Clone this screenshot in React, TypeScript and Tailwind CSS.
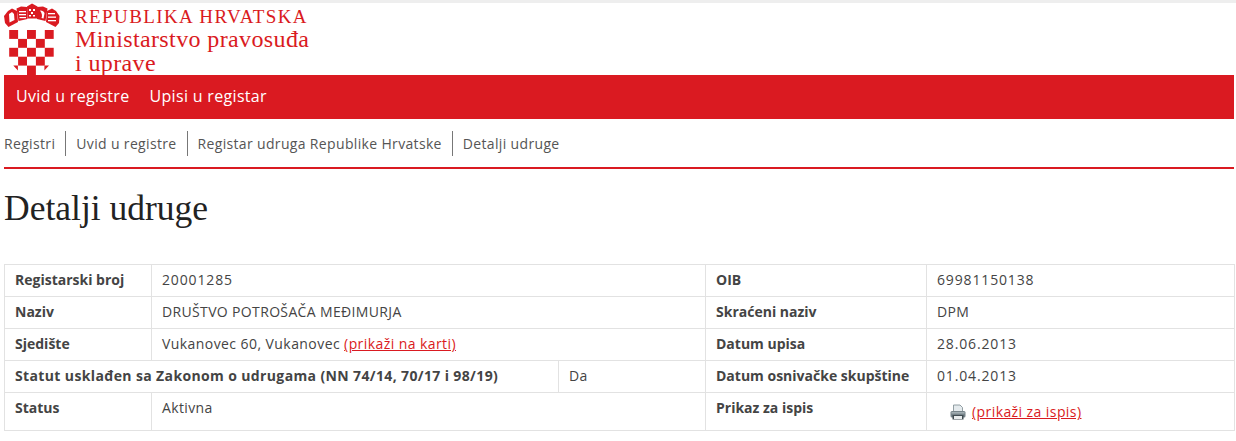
import React from 'react';

const sans = 'font-["Open_Sans","Noto_Sans",sans-serif]';

const CoatOfArms = () => {
  // red squares of the checkerboard, column and row
  const cells = [
    [0, 0], [2, 0], [4, 0],
    [1, 1], [3, 1],
    [0, 2], [2, 2], [4, 2],
    [1, 3], [3, 3],
  ];
  return (
    <svg width="56" height="72" viewBox="0 0 56 72" className="block shrink-0">
      <g fill="#da1a21">
        {cells.map(([c, r]) => (
          <rect key={`${c}-${r}`} x={5.2 + c * 8.9} y={27 + r * 8.9} width="8.9" height="8.9" />
        ))}
        <path d="M23 62.6h8.9V72H23z" />
        <path d="M9.3 62.6h4.6v5zM45 62.6h-4.6v5z" />
        {/* crown shields, left to right */}
        <path d="M0 13 L4 8 L8 5.5 L13 8 L14 19 L4.5 24 L1 20 Z" />
        <path d="M12.5 5.5 L17 3.5 L23 4 L23.5 16 L14.5 18 Z" />
        <path d="M23 3.5 L28 0.5 L33.5 3.5 L33 15.5 L23.5 15.5 Z" />
        <path d="M33 4 L39 3.5 L43.5 5.5 L41.5 18 L33 16 Z" />
        <path d="M43 8 L48 5.5 L52 8 L55.5 13 L55 20 L51.5 24 L42 19 Z" />
      </g>
      <g fill="#fff">
        <path d="M5 11l3-2 2 2 .5 6-5 2.5z" />
        <rect x="15" y="8" width="7" height="1.3" />
        <rect x="15" y="11" width="7" height="1.3" />
        <rect x="15.5" y="14" width="6.5" height="1.2" />
        <rect x="25" y="6" width="2" height="2" />
        <rect x="29" y="6" width="2" height="2" />
        <rect x="27" y="9" width="2" height="2" />
        <rect x="25" y="12" width="2" height="1.5" />
        <rect x="29" y="12" width="2" height="1.5" />
        <path d="M36 7.5c3 0 4.5 1.5 4.5 3l-1 5-2-.5c1-2 .5-5-1.5-7.5z" />
        <rect x="44" y="10" width="7" height="1.3" />
        <rect x="44" y="13.5" width="8" height="1.3" />
        <rect x="44" y="17" width="8" height="1.3" />
      </g>
    </svg>
  );
};

const PrinterIcon = () => (
  <svg width="16" height="16" viewBox="0 0 16 16" className="block shrink-0">
    <path d="M3.5 1h6.5l2.5 2.5V8h-9z" fill="#e4eaed" stroke="#87949a" strokeWidth="0.9" />
    <rect x="0.5" y="7" width="15" height="6.5" rx="1.5" fill="#77848a" />
    <rect x="1.5" y="8" width="13" height="1.6" fill="#a3afb4" />
    <rect x="2.5" y="11" width="11" height="4.5" fill="#414c52" />
    <rect x="4" y="12" width="8" height="3" fill="#e9edee" />
  </svg>
);

const Link = ({ children }: { children: React.ReactNode }) => (
  <a href="#" className="text-[#da1a21] underline tracking-[0.42px]">{children}</a>
);

const Th = ({ children, colSpan, wide }: { children: React.ReactNode; colSpan?: number; wide?: boolean }) => (
  <td colSpan={colSpan} className={`border border-[#e2e2e2] px-2.5 pb-0.5 h-8 align-middle font-bold text-[#444] whitespace-nowrap ${wide ? 'tracking-[0.37px]' : 'tracking-[0px]'}`}>
    {children}
  </td>
);

const Td = ({ children, colSpan, digits }: { children: React.ReactNode; colSpan?: number; digits?: boolean }) => (
  <td colSpan={colSpan} className={`border border-[#e2e2e2] px-2.5 pb-0.5 h-8 align-middle text-[#444] whitespace-nowrap ${digits ? 'tracking-[0.85px]' : ''}`}>
    {children}
  </td>
);

export default function App() {
  return (
    <div className={`min-h-[441px] bg-white border-t-[3px] border-[#eeeeee] pl-1 pr-0.5 overflow-hidden ${sans} text-[14px] tracking-[0.35px] text-[#444]`}>
      <header className="flex h-[72px] items-start">
        <CoatOfArms />
        <div className="ml-[15px] font-['Liberation_Serif',serif] text-[#da1a21]">
          <div className="text-[19px] leading-[27px] tracking-[1.4px]">REPUBLIKA HRVATSKA</div>
          <div className="-mt-[3px] text-[24px] leading-[24px] tracking-[0.38px]">Ministarstvo pravosuđa</div>
          <div className="text-[24px] leading-[24px] tracking-[0.38px]">i uprave</div>
        </div>
      </header>

      <nav className="flex h-11 items-center gap-5 bg-[#da1a21] px-3 pb-0.5 text-[16px] tracking-[0.32px] text-white">
        <a href="#">Uvid u registre</a>
        <a href="#">Upisi u registar</a>
      </nav>

      <div className="flex h-[50px] items-center border-b-2 border-[#da1a21] tracking-[0.34px] text-[#555]">
        <span className="pr-2.5">Registri</span>
        <span className="border-l border-[#777] px-2.5 leading-[25px]">Uvid u registre</span>
        <span className="border-l border-[#777] px-2.5 leading-[25px]">Registar udruga Republike Hrvatske</span>
        <span className="border-l border-[#777] px-2.5 leading-[25px]">Detalji udruge</span>
      </div>

      <h1 className="mt-[17px] font-['Liberation_Serif',serif] text-[35.5px] leading-[44px] tracking-normal text-[#222]">Detalji udruge</h1>

      <table className="mt-[34px] w-[1230px] table-fixed border-collapse">
        <colgroup>
          <col className="w-[147px]" />
          <col className="w-[407px]" />
          <col className="w-[147px]" />
          <col className="w-[221px]" />
          <col className="w-[308px]" />
        </colgroup>
        <tbody>
          <tr>
            <Th>Registarski broj</Th>
            <Td colSpan={2} digits>20001285</Td>
            <Th>OIB</Th>
            <Td digits>69981150138</Td>
          </tr>
          <tr>
            <Th>Naziv</Th>
            <Td colSpan={2}>DRUŠTVO POTROŠAČA MEĐIMURJA</Td>
            <Th>Skraćeni naziv</Th>
            <Td>DPM</Td>
          </tr>
          <tr>
            <Th>Sjedište</Th>
            <Td colSpan={2}><span className="tracking-[0.43px]">Vukanovec 60, Vukanovec</span> <Link>(prikaži na karti)</Link></Td>
            <Th>Datum upisa</Th>
            <Td digits>28.06.2013</Td>
          </tr>
          <tr>
            <Th colSpan={2} wide>Statut usklađen sa Zakonom o udrugama (NN 74/14, 70/17 i 98/19)</Th>
            <Td>Da</Td>
            <Th>Datum osnivačke skupštine</Th>
            <Td digits>01.04.2013</Td>
          </tr>
          <tr className="h-[38px]">
            <td className="border border-[#e2e2e2] px-2.5 pt-1 align-top font-bold tracking-[0px]">Status</td>
            <td colSpan={2} className="border border-[#e2e2e2] px-2.5 pt-1 align-top">Aktivna</td>
            <td className="border border-[#e2e2e2] px-2.5 pt-1 align-top font-bold tracking-[0px]">Prikaz za ispis</td>
            <td className="border border-[#e2e2e2] px-2.5 align-middle">
              <div className="flex items-center gap-1.5 pl-[13px]">
                <PrinterIcon />
                <Link>(prikaži za ispis)</Link>
              </div>
            </td>
          </tr>
        </tbody>
      </table>
    </div>
  );
}
